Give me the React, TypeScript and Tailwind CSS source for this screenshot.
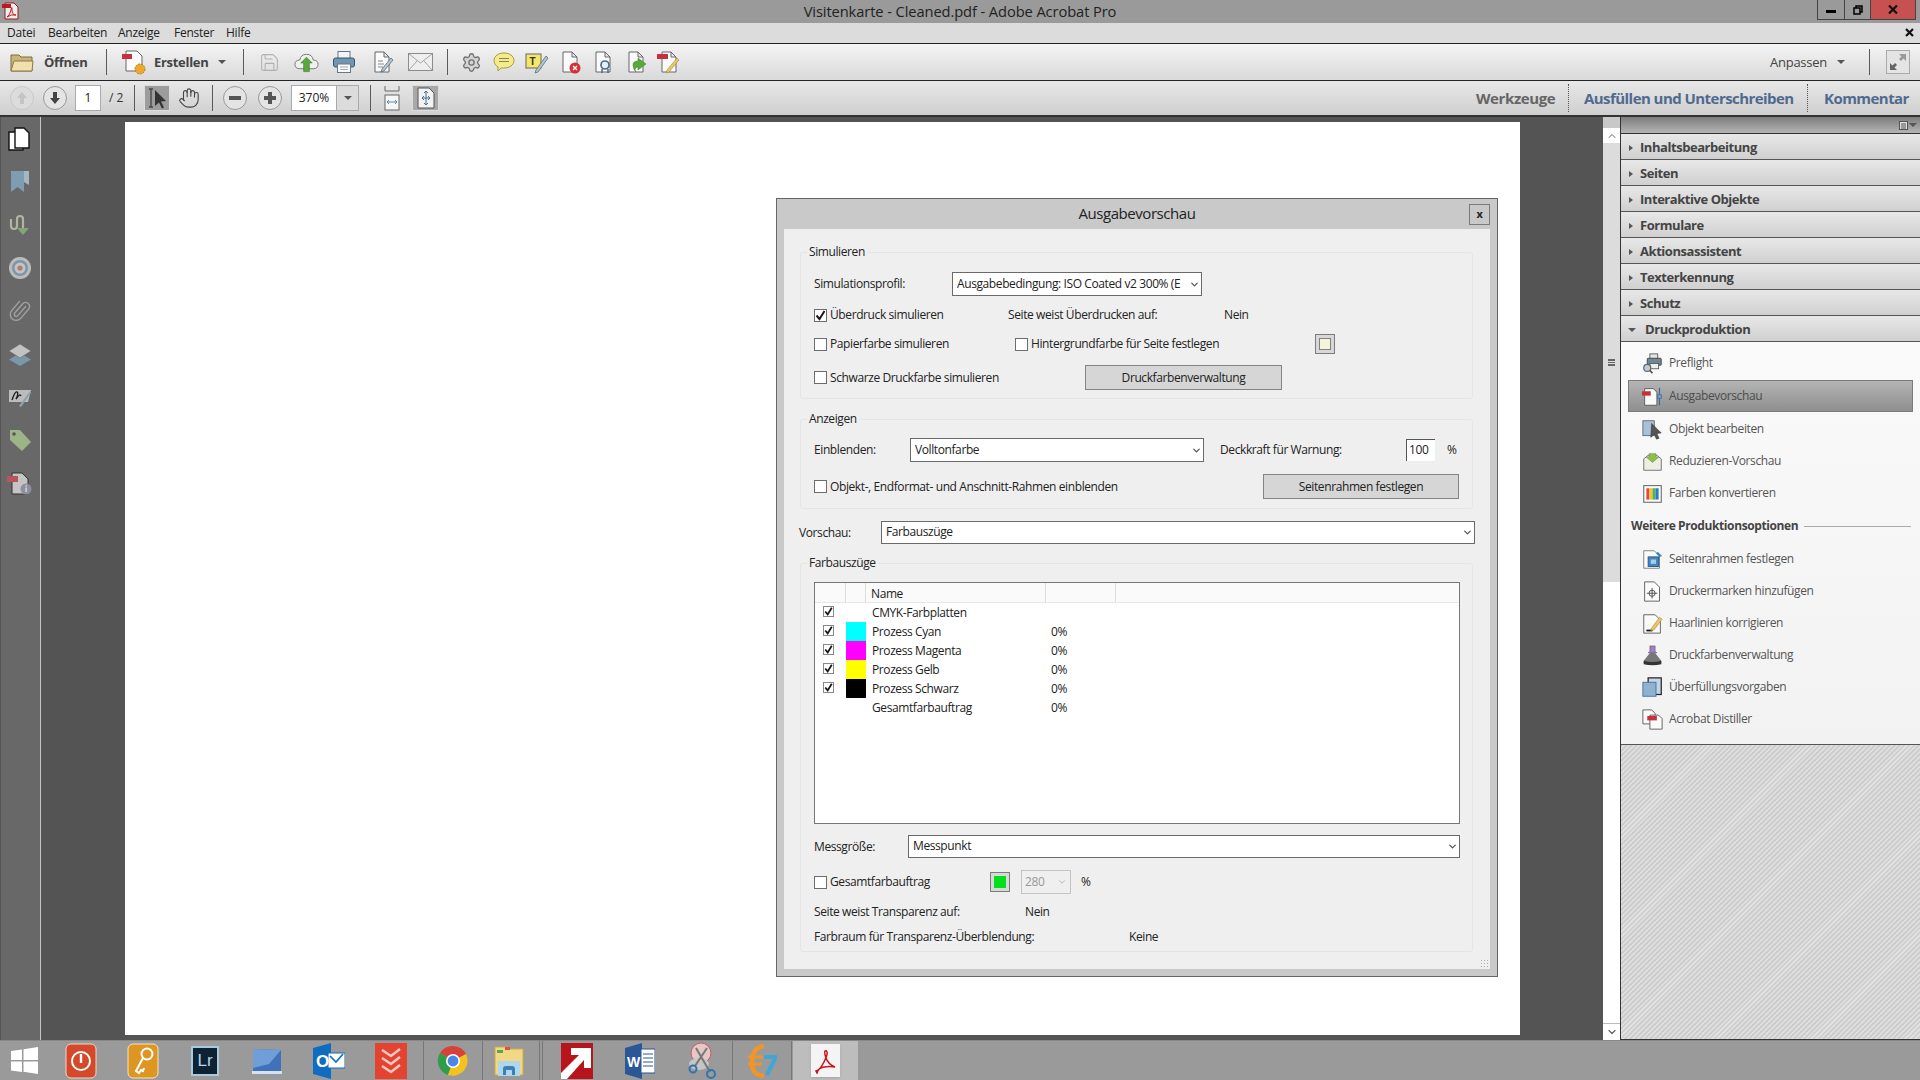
import React from "react";
import { Hand, Paperclip, Settings, Save, ChevronDown, ChevronUp } from "lucide-react";

const menu = [
  { label: "Datei", w: "w-[41px]" },
  { label: "Bearbeiten", w: "w-[70px]" },
  { label: "Anzeige", w: "w-[56px]" },
  { label: "Fenster", w: "w-[52px]" },
  { label: "Hilfe", w: "w-[40px]" },
];

function Doc({ fill = "#fafafa", stroke = "#666" }: { fill?: string; stroke?: string }) {
  return <path d="M5 2h9l5 5v15H5z M14 2v5h5" fill={fill} stroke={stroke} strokeWidth="1" />;
}

function Ic({ children, size = 24 }: { children: React.ReactNode; size?: number }) {
  return (
    <svg width={size} height={size} viewBox="0 0 24 24" className="shrink-0">
      {children}
    </svg>
  );
}

function Tb({ w, children }: { w: string; children?: React.ReactNode }) {
  return <div className={`${w} flex items-center justify-center shrink-0`}>{children}</div>;
}

function Sep({ ml = "" }: { ml?: string }) {
  return <div className={`w-px h-[26px] bg-[#5a5a5a] shrink-0 ${ml}`} />;
}

function Caret({ className = "" }: { className?: string }) {
  return <div className={`w-0 h-0 border-x-[4px] border-x-transparent border-t-[4px] border-t-[#555] ${className}`} />;
}

function Check({ on = false }: { on?: boolean }) {
  return (
    <div className="w-[13px] h-[13px] border border-[#6d6d6d] bg-white flex items-center justify-center shrink-0">
      {on && (
        <svg width="11" height="11" viewBox="0 0 11 11">
          <path d="M1.5 5.5l3 3.5 5-8" fill="none" stroke="#1a1a1a" strokeWidth="2" />
        </svg>
      )}
    </div>
  );
}

function Labeled({ on, w, children }: { on?: boolean; w: string; children: React.ReactNode }) {
  return (
    <div className={`${w} flex items-center gap-[3px] shrink-0`}>
      <Check on={on} />
      <span className="whitespace-nowrap">{children}</span>
    </div>
  );
}

function Select({ w, h = "h-[24px]", children, clip }: { w: string; h?: string; children: React.ReactNode; clip?: boolean }) {
  return (
    <div className={`${w} ${h} shrink-0 border border-[#6a6a6a] bg-white flex items-center pl-[4px] pr-[1px]`}>
      <span className={`flex-1 whitespace-nowrap overflow-hidden pb-[1px] ${clip ? "mr-[7px]" : ""}`}>{children}</span>
      <ChevronDown size={11} strokeWidth={2.8} className="text-[#555] shrink-0" />
    </div>
  );
}

function Btn({ w, h = "h-[25px]", children }: { w: string; h?: string; children: React.ReactNode }) {
  return (
    <div className={`${w} ${h} shrink-0 bg-[#d6d6d6] border border-[#848484] flex items-center justify-center`}>{children}</div>
  );
}

function Group({ title, className = "", children }: { title: string; className?: string; children: React.ReactNode }) {
  return (
    <div className={`relative mx-[16px] mr-[17px] border border-[#e5e5e5] rounded-[3px] pl-[13px] ${className}`}>
      <div className="absolute -top-[9px] left-[6px] bg-[#efefef] px-[2px] leading-[16px]">{title}</div>
      {children}
    </div>
  );
}

function Swatch({ color }: { color: string }) {
  return (
    <div className="w-[20px] h-[20px] shrink-0 border border-[#7c7c7c] bg-[#d8d8d8] flex items-center justify-center">
      <div className={`w-[12px] h-[12px] border border-[#808080] ${color}`} />
    </div>
  );
}

const plates = [
  { name: "CMYK-Farbplatten", check: true, color: "", pct: "" },
  { name: "Prozess Cyan", check: true, color: "bg-[#00ffff]", pct: "0%" },
  { name: "Prozess Magenta", check: true, color: "bg-[#ff00ff]", pct: "0%" },
  { name: "Prozess Gelb", check: true, color: "bg-[#ffff00]", pct: "0%" },
  { name: "Prozess Schwarz", check: true, color: "bg-black", pct: "0%" },
  { name: "Gesamtfarbauftrag", check: false, color: "", pct: "0%" },
];

function OutputPreview() {
  return (
    <div className="absolute left-[651px] top-[76px] w-[722px] h-[779px] border border-[#666] bg-[#c9c9c9] flex flex-col text-[12px] text-[#222] tracking-[-0.4px]">
      <div className="h-[30px] shrink-0 flex items-center pl-[28px] pr-[7px]">
        <div className="flex-1 text-center text-[15px] text-[#222] tracking-[-0.45px] pb-[2px]">Ausgabevorschau</div>
        <div className="w-[21px] h-[21px] border border-[#7a7a7a] flex items-center justify-center text-[11px] font-bold">x</div>
      </div>
      <div className="mx-[7px] h-[740px] bg-[#efefef] pt-[23px] flex flex-col relative">
        <Group title="Simulieren" className="h-[147px]">
          <div className="mt-[19px] h-[24px] flex items-center">
            <div className="w-[138px]">Simulationsprofil:</div>
            <Select w="w-[250px]" clip>Ausgabebedingung: ISO Coated v2 300% (E</Select>
          </div>
          <div className="mt-[9px] h-[20px] flex items-center">
            <Labeled on w="w-[194px]">Überdruck simulieren</Labeled>
            <div className="w-[216px]">Seite weist Überdrucken auf:</div>
            <div>Nein</div>
          </div>
          <div className="mt-[9px] h-[20px] flex items-center">
            <Labeled w="w-[201px]">Papierfarbe simulieren</Labeled>
            <Labeled w="w-[300px]">Hintergrundfarbe für Seite festlegen</Labeled>
            <Swatch color="bg-[#f4f4dc]" />
          </div>
          <div className="mt-[11px] h-[25px] flex items-center">
            <Labeled w="w-[271px]">Schwarze Druckfarbe simulieren</Labeled>
            <Btn w="w-[197px]">Druckfarbenverwaltung</Btn>
          </div>
        </Group>
        <Group title="Anzeigen" className="h-[90px] mt-[20px]">
          <div className="mt-[18px] h-[24px] flex items-center">
            <div className="w-[96px]">Einblenden:</div>
            <Select w="w-[294px]">Volltonfarbe</Select>
            <div className="w-[186px] ml-[16px]">Deckkraft für Warnung:</div>
            <div className="w-[29px] h-[22px] border-t border-l border-[#555] bg-white pl-[2px] leading-[20px]">100</div>
            <div className="ml-[12px]">%</div>
          </div>
          <div className="mt-[12px] h-[25px] flex items-center">
            <Labeled w="w-[449px]">Objekt-, Endformat- und Anschnitt-Rahmen einblenden</Labeled>
            <Btn w="w-[196px]">Seitenrahmen festlegen</Btn>
          </div>
        </Group>
        <div className="mt-[12px] h-[23px] pl-[15px] flex items-center">
          <div className="w-[82px]">Vorschau:</div>
          <Select w="w-[594px]" h="h-[23px]">Farbauszüge</Select>
        </div>
        <Group title="Farbauszüge" className="h-[389px] mt-[19px]">
          <div className="mt-[18px] w-[646px] h-[242px] border border-[#777] bg-white flex flex-col">
            <div className="h-[20px] shrink-0 flex border-b border-[#e6e6e6] bg-[#fafafa]">
              <div className="w-[31px] border-r border-[#ddd]" />
              <div className="w-[20px] border-r border-[#ddd]" />
              <div className="w-[180px] border-r border-[#ddd] pl-[5px] leading-[21px]">Name</div>
              <div className="w-[70px] border-r border-[#ddd]" />
            </div>
            <div>
              {plates.map((p) => (
                <div key={p.name} className="h-[19px] flex items-center">
                  <div className="w-[31px] pl-[8px]">
                    {p.check && (
                      <div className="w-[11px] h-[11px] border border-[#888] bg-white flex items-center justify-center -mt-[3px]">
                        <svg width="9" height="9" viewBox="0 0 11 11">
                          <path d="M1.500 5.500l3 3.500 5-8" fill="none" stroke="#1a1a1a" strokeWidth="2.200" />
                        </svg>
                      </div>
                    )}
                  </div>
                  <div className={`w-[20px] h-[19px] shrink-0 ${p.color}`} />
                  <div className="w-[185px] pl-[6px]">{p.name}</div>
                  <div>{p.pct}</div>
                </div>
              ))}
            </div>
          </div>
          <div className="mt-[11px] h-[23px] flex items-center">
            <div className="w-[94px]">Messgröße:</div>
            <Select w="w-[552px]" h="h-[23px]">Messpunkt</Select>
          </div>
          <div className="mt-[12px] h-[24px] flex items-center">
            <Labeled w="w-[176px]">Gesamtfarbauftrag</Labeled>
            <div className="w-[20px] h-[20px] shrink-0 border border-[#7c7c7c] bg-[#d8d8d8] flex items-center justify-center">
              <div className="w-[12px] h-[12px] bg-[#00e01e]" />
            </div>
            <div className="ml-[11px] w-[50px] h-[24px] border border-[#c4c4c4] flex items-center pl-[3px] text-[#999]">
              <span className="flex-1">280</span>
              <ChevronDown size={10} strokeWidth={2} className="text-[#aaa] mr-[3px]" />
            </div>
            <div className="ml-[10px]">%</div>
          </div>
          <div className="mt-[8px] h-[20px] flex items-center">
            <div className="w-[211px]">Seite weist Transparenz auf:</div>
            <div>Nein</div>
          </div>
          <div className="mt-[5px] h-[20px] flex items-center">
            <div className="w-[315px]">Farbraum für Transparenz-Überblendung:</div>
            <div>Keine</div>
          </div>
        </Group>
        <div className="absolute right-[2px] bottom-[2px] w-[8px] h-[8px] bg-[radial-gradient(#aaa_1px,transparent_1px)] bg-[length:3px_3px]" />
      </div>
    </div>
  );
}

const railIcons: React.ReactNode[] = [
  <svg key="p" width="26" height="26" viewBox="0 0 26 26">
    <path d="M2 6h14v18H2z" fill="#fff" stroke="#111" strokeWidth="1.400" />
    <path d="M8 2h9l5 5v15H8z" fill="#fff" stroke="#111" strokeWidth="1.400" />
  </svg>,
  <svg key="b" width="24" height="26" viewBox="0 0 24 26">
    <path d="M3 2h13v21l-6.500-5L3 23z" fill="#7f9db1" />
    <path d="M16 2h5v14l-5-3z" fill="#a5b7c2" />
  </svg>,
  <svg key="s" width="24" height="24" viewBox="0 0 24 24">
    <path d="M3 6v7q0 3 3 3t3-3V6q0-3 3-3t3 3v9" fill="none" stroke="#aeb6a2" strokeWidth="2.200" />
    <path d="M9 15h12l-6 7z" fill="#86a47a" />
  </svg>,
  <svg key="t" width="24" height="24" viewBox="0 0 24 24">
    <circle cx="12" cy="12" r="11" fill="#bcbcbc" />
    <circle cx="12" cy="12" r="8" fill="#7a96a8" />
    <circle cx="12" cy="12" r="5.500" fill="#c4c4c4" />
    <circle cx="12" cy="12" r="2.600" fill="#b47a7a" />
  </svg>,
  <Paperclip key="c" size={24} strokeWidth={1.400} className="text-[#a0a0a0] -scale-x-100 rotate-[85deg]" />,
  <svg key="l" width="24" height="24" viewBox="0 0 24 24">
    <path d="M12 11l11 6.500L12 24 1 17.500z" fill="#7a98aa" />
    <path d="M12 2l11 7-11 7L1 9z" fill="#c2c2c2" stroke="#666" strokeWidth=".6" />
  </svg>,
  <svg key="g" width="24" height="24" viewBox="0 0 24 24">
    <path d="M1 5h22l-3 12H1z" fill="#bcbcbc" />
    <path d="M4 15q3-9 5-8t-1 7q4-6 5-3" fill="none" stroke="#222" strokeWidth="1.400" />
    <path d="M11 21L22 6l1 2-10 14z" fill="#8fa3ae" />
  </svg>,
  <svg key="h" width="24" height="24" viewBox="0 0 24 24">
    <path d="M2 2h10l11 12-9 9L2 12z" fill="#9db487" />
    <circle cx="6" cy="6" r="1.800" fill="#555" />
  </svg>,
  <svg key="i" width="26" height="26" viewBox="0 0 26 26">
    <path d="M5 3h10l6 6v15H5z" fill="#c4c4c4" stroke="#333" />
    <rect x="0" y="6" width="11" height="6" fill="#b8545c" />
    <circle cx="19" cy="19" r="5.500" fill="#8e8e9e" />
    <rect x="18.400" y="17.500" width="1.400" height="4.500" fill="#ddd" />
    <rect x="18.400" y="15.200" width="1.400" height="1.400" fill="#ddd" />
  </svg>,
];

const sections = ["Inhaltsbearbeitung", "Seiten", "Interaktive Objekte", "Formulare", "Aktionsassistent", "Texterkennung", "Schutz"];

const panelIcons: Record<string, React.ReactNode> = {
  preflight: (
    <>
      <rect x="9" y="1" width="9" height="6" fill="#e4e4e4" stroke="#555" />
      <rect x="6" y="6" width="16" height="8" rx="1" fill="#6d8796" stroke="#444" />
      <rect x="9" y="12" width="10" height="6" fill="#eee" stroke="#555" />
      <circle cx="6" cy="17" r="4" fill="#bcd" stroke="#666" strokeWidth="1.400" />
      <path d="M9 20l3 3" stroke="#555" strokeWidth="2" />
    </>
  ),
  output: (
    <>
      <path d="M3 3h10l4 4v15H3z" fill="#fafafa" stroke="#555" />
      <rect x="0" y="6" width="10" height="5" fill="#c6303c" />
      <path d="M20 2v20" stroke="#3d6f9e" strokeWidth="1.400" />
      <rect x="18" y="10" width="4" height="4" fill="#7aa5c8" stroke="#3d6f9e" />
    </>
  ),
  object: (
    <>
      <rect x="1" y="2" width="13" height="17" fill="#a9c0d8" stroke="#55677a" />
      <path d="M11 5l11 11-5 .5 2.500 5.500-3 1-2.500-5.500L10 21z" fill="#555" stroke="#333" strokeWidth=".6" />
    </>
  ),
  flatten: (
    <>
      <path d="M2 9l5-4h10l5 4v13H2z" fill="#eeeee4" stroke="#666" />
      <path d="M8 3h8v4h3l-7 6-7-6h3z" fill="#8fc04e" stroke="#5e8a2f" strokeWidth=".6" />
    </>
  ),
  colors: (
    <>
      <rect x="2" y="3" width="20" height="19" fill="#fff" stroke="#666" strokeWidth="1.200" />
      <rect x="5" y="6" width="3.500" height="13" fill="#e8483c" />
      <rect x="8.500" y="6" width="3.500" height="13" fill="#f4c430" />
      <rect x="12" y="6" width="3.500" height="13" fill="#4fb35a" />
      <rect x="15.500" y="6" width="3.500" height="13" fill="#2f79c8" />
    </>
  ),
  frames: (
    <>
      <path d="M2 2h12l6 6v14H2z" fill="#fafafa" stroke="#777" />
      <rect x="7" y="9" width="12" height="11" fill="#3e86c4" stroke="#25557f" />
      <rect x="10" y="12" width="6" height="5" fill="#a7cdec" />
      <path d="M18 3l5 5-3 1-4-4z" fill="#3e86c4" />
    </>
  ),
  marks: (
    <>
      <path d="M3 1h11l6 6v16H3z" fill="#fafafa" stroke="#555" />
      <circle cx="11.500" cy="14" r="3.500" fill="none" stroke="#444" />
      <path d="M11.500 8v12M5.500 14h12" stroke="#444" />
    </>
  ),
  hairline: (
    <>
      <path d="M2 2h13l6 6v15H2z" fill="#fafafa" stroke="#555" />
      <path d="M5 20h7" stroke="#111" strokeWidth="2" />
      <path d="M11 17L20 5l3 2-9 12-4 1z" fill="#e8c66c" stroke="#a58a3f" strokeWidth=".7" />
    </>
  ),
  ink: (
    <>
      <path d="M9 1h6v6l2 2H7l2-2z" fill="#9b7fc0" stroke="#5b4a7a" strokeWidth=".6" />
      <path d="M9 9h6l7 9v3q-10 3-20 0v-3z" fill="#777" />
      <path d="M2 18q10 3 20 0v4q-10 2-20 0z" fill="#333" />
    </>
  ),
  trap: (
    <>
      <rect x="7" y="1" width="15" height="19" fill="#c4d6e4" stroke="#222" strokeWidth="1.400" />
      <rect x="1" y="6" width="15" height="16" fill="#8fb3cf" stroke="#3d6f9e" />
    </>
  ),
  distiller: (
    <>
      <path d="M1 1h10l4 4v12H1z" fill="#fafafa" stroke="#555" />
      <path d="M9 7h10l4 4v12H9z" fill="#fafafa" stroke="#555" />
      <rect x="6" y="8" width="11" height="5" fill="#c6303c" />
    </>
  ),
};

function PanelRow({ icon, label, active }: { icon: string; label: string; active?: boolean }) {
  return (
    <div
      className={`h-[32px] flex items-center ${
        active ? "mx-[7px] my-px h-[30px] border border-[#7b7b7b] bg-gradient-to-b from-[#b4b4b4] to-[#8f8f8f] pl-[13px]" : "pl-[21px]"
      }`}
    >
      <svg width="21" height="21" viewBox="0 0 24 24" className="shrink-0">
        {panelIcons[icon]}
      </svg>
      <span className={`ml-[6px] text-[12px] tracking-[-0.38px] ${active ? "text-[#4c4c4c]" : "text-[#555]"}`}>{label}</span>
    </div>
  );
}

function Taskbar() {
  return (
    <div className="h-[40px] shrink-0 bg-[#9a9a9a] border-t border-[#888] flex items-center">
      <Tb w="w-[49px]">
        <svg width="27" height="27" viewBox="0 0 27 27">
          <path d="M0 4l11-1.500v10.500H0zM12.500 2.300L27 0v13H12.500zM0 14.500h11V25L0 23.500zM12.500 14.500H27V27l-14.500-2.200z" fill="#fff" />
        </svg>
      </Tb>
      <Tb w="w-[63px]">
        <svg width="32" height="36" viewBox="0 0 32 36">
          <rect x="1" y="1" width="30" height="34" rx="5" fill="#d4492a" stroke="#f3d6c8" />
          <circle cx="16" cy="18" r="9" fill="none" stroke="#fff" strokeWidth="2" />
          <path d="M16 11v9" stroke="#fff" strokeWidth="2.400" />
        </svg>
      </Tb>
      <Tb w="w-[62px]">
        <svg width="32" height="36" viewBox="0 0 32 36">
          <rect x="1" y="1" width="30" height="34" rx="5" fill="#dc9621" stroke="#f7e6c4" />
          <circle cx="20" cy="11" r="5.500" fill="none" stroke="#fff" strokeWidth="2" />
          <path d="M16 15L9 28l3 2 2-3 2 1 1-3" fill="none" stroke="#fff" strokeWidth="2" />
        </svg>
      </Tb>
      <Tb w="w-[62px]">
        <div className="w-[28px] h-[30px] bg-[#0d2233] border-2 border-[#a9c9dc] text-[#b7d6ea] text-[17px] leading-[26px] text-center font-['Liberation_Sans',sans-serif]">Lr</div>
      </Tb>
      <Tb w="w-[61px]">
        <svg width="32" height="28" viewBox="0 0 32 28">
          <path d="M2 2l28 1v21H2z" fill="#3f72b8" />
          <path d="M2 2l28 1-12 14-16 4z" fill="#6f9fd6" />
          <rect x="1" y="24" width="30" height="3" fill="#d5e2ee" />
        </svg>
      </Tb>
      <Tb w="w-[63px]">
        <svg width="32" height="36" viewBox="0 0 32 36">
          <path d="M0 5l18-5v36L0 31z" fill="#0f6cc0" />
          <rect x="15" y="10" width="17" height="15" fill="#fff" stroke="#0f6cc0" />
          <path d="M17 13l6 6 7-8" fill="none" stroke="#0f6cc0" strokeWidth="1.600" />
          <text x="3" y="24" fontSize="17" fontWeight="700" fill="#fff" fontFamily="Liberation Sans">O</text>
        </svg>
      </Tb>
      <Tb w="w-[62px]">
        <svg width="32" height="36" viewBox="0 0 32 36">
          <rect width="32" height="36" fill="#e44332" />
          <path d="M7 7l9 6 9-7M7 15l9 6 9-7M7 23l9 6 9-7" fill="none" stroke="#f7c8c0" strokeWidth="2.600" />
        </svg>
      </Tb>
      <Tb w="w-[61px]">
        <div className="w-[60px] h-[39px] border-x border-[#777] flex items-center justify-center">
          <svg width="32" height="32" viewBox="0 0 32 32">
            <path d="M16 16L29 9A15 15 0 0 0 3 8z" fill="#d8413a" />
            <path d="M16 16L3 8A15 15 0 0 0 11 30z" fill="#2f9e4a" />
            <path d="M16 16L11 30A15 15 0 0 0 29 9z" fill="#f3c21f" />
            <circle cx="16" cy="16" r="7" fill="#fff" />
            <circle cx="16" cy="16" r="5.400" fill="#4a86e8" />
          </svg>
        </div>
      </Tb>
      <Tb w="w-[51px]">
        <svg width="32" height="36" viewBox="0 0 32 36">
          <path d="M2 4h12l2 2h14v26H2z" fill="#f2d884" stroke="#c9a94e" />
          <rect x="4" y="7" width="6" height="3" fill="#59a84f" />
          <rect x="12" y="4" width="5" height="3" fill="#d8524a" />
          <rect x="5" y="18" width="22" height="15" fill="#aed6ee" />
          <path d="M10 32v-6q0-3 3-3h6q3 0 3 3v6h-3v-5h-6v5z" fill="#3c7fb1" />
        </svg>
      </Tb>
      <div className="w-[13px] h-[39px] flex justify-center shrink-0"><div className="w-[4px] border-x border-[#777]" /></div>
      <Tb w="w-[59px]">
        <svg width="32" height="36" viewBox="0 0 32 36">
          <rect width="32" height="36" fill="#b8141c" />
          <path d="M0 36v-6L18 12h-8V5h20v20h-7v-8L6 36z" fill="#fff" />
        </svg>
      </Tb>
      <Tb w="w-[67px]">
        <svg width="30" height="36" viewBox="0 0 30 36">
          <path d="M0 5l17-5v36L0 31z" fill="#2b5797" />
          <rect x="16" y="6" width="14" height="24" fill="#fff" stroke="#2b5797" />
          <path d="M18 11h10M18 15h10M18 19h10M18 23h10" stroke="#2b5797" />
          <text x="2" y="24" fontSize="14" fontWeight="700" fill="#fff" fontFamily="Liberation Sans">W</text>
        </svg>
      </Tb>
      <Tb w="w-[58px]">
        <svg width="30" height="38" viewBox="0 0 30 38">
          <circle cx="14" cy="11" r="10" fill="#e7c6c6" stroke="#c65f5f" />
          <ellipse cx="12" cy="22" rx="10" ry="6" fill="#c5c5c5" />
          <path d="M9 6l14 24M20 6L8 24" stroke="#777" strokeWidth="2" />
          <circle cx="24" cy="32" r="4" fill="none" stroke="#2f74b5" strokeWidth="2" />
          <circle cx="6" cy="27" r="3.500" fill="none" stroke="#2f74b5" strokeWidth="2" />
        </svg>
      </Tb>
      <Tb w="w-[62px]">
        <div className="w-[60px] h-[39px] border-x border-[#777] flex items-center justify-center">
          <svg width="30" height="34" viewBox="0 0 30 34">
            <path d="M17 2Q6 3 5 17t12 15" fill="none" stroke="#f0952a" strokeWidth="4.500" />
            <path d="M1 13h15M1 20h14" stroke="#f0952a" strokeWidth="3" />
            <path d="M17 13h12L20 31" fill="none" stroke="#3fa7d6" strokeWidth="4" />
          </svg>
        </div>
      </Tb>
      <div className="w-[65px] h-[39px] bg-[#bdbdbd] flex items-center justify-center shrink-0">
        <div className="w-[29px] h-[33px] bg-[#f4f4f4] shadow-sm flex items-center justify-center">
          <svg width="24" height="26" viewBox="0 0 24 26">
            <path d="M2 23q4-1 8-9t3-10-2-1 1 7 9 9q-5-1-11 0t-7 6z" fill="none" stroke="#c8141c" strokeWidth="1.500" />
          </svg>
        </div>
      </div>
    </div>
  );
}

function Round({ children, dim }: { children: React.ReactNode; dim?: boolean }) {
  return (
    <div className={`w-[24px] h-[24px] rounded-full border flex items-center justify-center shrink-0 ${dim ? "border-[#c8c8c8] bg-[#dcdcdc]" : "border-[#999] bg-[#e4e4e4]"}`}>
      <svg width="20" height="20" viewBox="0 0 20 20">{children}</svg>
    </div>
  );
}

export default function App() {
  return (
    <div className="w-[1920px] h-[1080px] flex flex-col overflow-hidden font-['Open_Sans',sans-serif] text-[12px] text-[#222]">
      <div className="h-[23px] shrink-0 bg-[#9a9a9a] flex">
        <div className="w-[200px] pl-[2px] pt-[1px]">
          <svg width="17" height="19" viewBox="0 0 17 19">
            <path d="M3 2h9l4 4v12H3z" fill="#eee" stroke="#8a2020" />
            <rect x="0" y="3" width="9" height="4" fill="#c01820" />
            <path d="M5 16q3-2 4-7t1 0 4 5q-5-1-9 2z" fill="none" stroke="#c01820" />
          </svg>
        </div>
        <div className="flex-1 text-center text-[14.700px] leading-[23px] tracking-[-0.1px] text-[#222]">Visitenkarte - Cleaned.pdf - Adobe Acrobat Pro</div>
        <div className="w-[200px] flex justify-end pr-[4px]">
          <div className="w-[28px] h-[20px] border-x border-b border-[#444] flex items-center justify-center pt-[4px]">
            <div className="w-[10px] h-[3px] bg-black" />
          </div>
          <div className="w-[26px] h-[20px] border-r border-b border-[#444] flex items-center justify-center">
            <svg width="10" height="10" viewBox="0 0 10 10">
              <path d="M3 2.500V1h6v6H7.500M1 3h6v6H1z" fill="none" stroke="#000" strokeWidth="1.500" />
            </svg>
          </div>
          <div className="w-[45px] h-[20px] bg-[#c75050] border-r border-b border-[#444] flex items-center justify-center">
            <svg width="10" height="9" viewBox="0 0 10 9">
              <path d="M1 .5l8 8M9 .5l-8 8" stroke="#111" strokeWidth="2.200" />
            </svg>
          </div>
        </div>
      </div>

      <div className="h-[21px] shrink-0 bg-[#dcdcdc] border-b border-[#222] flex items-center pl-[7px] text-[12px] pb-px tracking-[-0.25px]">
        {menu.map((m) => (
          <div key={m.label} className={m.w}>{m.label}</div>
        ))}
        <div className="flex-1" />
        <svg width="9" height="9" viewBox="0 0 9 9" className="mr-[6px]">
          <path d="M1 1l7 7M8 1L1 8" stroke="#111" strokeWidth="2.200" />
        </svg>
      </div>

      <div className="h-[37px] shrink-0 bg-gradient-to-b from-[#f4f4f4] to-[#d9d9d9] border-b border-[#222] flex items-center">
        <div className="w-[44px] flex justify-center">
          <svg width="24" height="20" viewBox="0 0 24 20">
            <path d="M1 3h8l2 2h11v14H1z" fill="#c9b47a" stroke="#7f6c3c" />
            <path d="M1 19l3-10h19l-1 10z" fill="#efe0ae" stroke="#8c7a48" />
          </svg>
        </div>
        <div className="w-[62px] pt-[2px] text-[13px] font-bold text-[#444] tracking-[-0.3px]">Öffnen</div>
        <Sep />
        <div className="w-[47px] pl-[7px] flex justify-center">
          <svg width="24" height="26" viewBox="0 0 24 26">
            <path d="M4 2h11l5 5v15H4z" fill="#fafafa" stroke="#666" />
            <rect x="0" y="5" width="10" height="5" fill="#c6303c" />
            <circle cx="18" cy="20" r="5" fill="#eda92c" stroke="#b97a12" strokeDasharray="2 1" />
          </svg>
        </div>
        <div className="w-[64px] pt-[2px] text-[13px] font-bold text-[#444] tracking-[-0.3px]">Erstellen</div>
        <Caret />
        <div className="w-[17px]" />
        <Sep />
        <Tb w="w-[50px]"><Save size={21} strokeWidth={1.200} className="text-[#b0b0b0]" /></Tb>
        <Tb w="w-[25px]">
          <svg width="26" height="22" viewBox="0 0 26 22">
            <path d="M6 18q-5 0-5-4.500t5-4.500q1-6 7-6t7 6q5 0 5 4.500t-5 4.500z" fill="#f0f0f0" stroke="#777" />
            <path d="M13 6l6 6h-3v9h-6v-9H7z" fill="#5aa83c" stroke="#3d7a26" strokeWidth=".6" />
          </svg>
        </Tb>
        <Tb w="w-[50px]">
          <svg width="24" height="24" viewBox="0 0 24 24">
            <rect x="6" y="1.500" width="12" height="8" fill="#f4f4f4" stroke="#66798a" />
            <rect x="1.500" y="8" width="21" height="9" rx="2" fill="#6f97b5" stroke="#3f5566" />
            <rect x="5.500" y="14" width="13" height="8.500" fill="#f8f8f8" stroke="#66798a" />
            <path d="M8 17h8M8 19.500h8" stroke="#aaa" />
          </svg>
        </Tb>
        <Tb w="w-[25px]">
          <Ic><Doc /><path d="M8 17h5M8 14h6M8 11h5" stroke="#888" /><path d="M12 19l9-11 2 2-9 11-3 1z" fill="#b4c6d2" stroke="#4c5f6c" strokeWidth=".7" /></Ic>
        </Tb>
        <Tb w="w-[53px]">
          <svg width="25" height="18" viewBox="0 0 25 18">
            <rect x=".5" y=".5" width="24" height="17" fill="#eeeeee" stroke="#8c8c8c" />
            <path d="M1 1l11.500 9L24 1M1 17l8-9M24 17l-8-9" fill="none" stroke="#a4a4a4" />
          </svg>
        </Tb>
        <Sep ml="mr-[11px]" />
        <Tb w="w-[24px]"><Settings size={21} strokeWidth={1.500} fill="#d4d4d4" className="text-[#707070]" /></Tb>
        <Tb w="w-[42px]">
          <svg width="22" height="20" viewBox="0 0 22 20">
            <path d="M11 1c5.500 0 10 3 10 7.500S16.500 16 11 16q-2 0-3 0l-3 3v-4C2.500 13.500 1 11 1 8.500 1 4 5.500 1 11 1z" fill="#f4ec8c" stroke="#a69a3a" />
            <path d="M6 6.500h10M6 9.500h10" stroke="#8a8648" />
          </svg>
        </Tb>
        <Tb w="w-[24px]">
          <Ic><rect x="1" y="4" width="15" height="14" fill="#f3e668" stroke="#666" /><text x="4.500" y="14.500" fontSize="10" fontWeight="700" fill="#333" fontFamily="Liberation Sans">T</text><path d="M11 20L21 6l2 2-10 14-3 1z" fill="#b4c6d2" stroke="#4c5f6c" strokeWidth=".7" /></Ic>
        </Tb>
        <Tb w="w-[42px]">
          <Ic><Doc /><circle cx="17" cy="18" r="5.500" fill="#d62f3a" /><path d="M15 16l4 4M19 16l-4 4" stroke="#fff" strokeWidth="1.300" /></Ic>
        </Tb>
        <Tb w="w-[24px]">
          <Ic><Doc /><circle cx="14" cy="15" r="4" fill="#e4eef4" stroke="#4a6d88" strokeWidth="1.700" /><path d="M11 19v4M17 19v4" stroke="#4a6d88" strokeWidth="1.500" /></Ic>
        </Tb>
        <Tb w="w-[42px]">
          <Ic><Doc /><path d="M9 15q0-4 5-4v-3l8 6-8 6v-3q-3 0-3 3 0 1 1 2-3-3-3-7z" fill="#5aa83c" stroke="#3d7a26" strokeWidth=".5" /></Ic>
        </Tb>
        <Tb w="w-[24px]">
          <Ic><Doc /><rect x="0" y="4" width="11" height="5" fill="#c6303c" /><path d="M10 20L20 8l2 2-10 12-3 1z" fill="#e8c66c" stroke="#a58a3f" strokeWidth=".6" /></Ic>
        </Tb>
        <div className="flex-1" />
        <div className="w-[67px] pt-[1px] text-[13px] text-[#444] tracking-[-0.25px]">Anpassen</div>
        <Caret />
        <div className="w-[24px]" />
        <Sep />
        <div className="w-[16px]" />
        <div className="w-[24px] h-[24px] border border-[#aaa] bg-[#e4e4e4] flex items-center justify-center">
          <svg width="20" height="20" viewBox="0 0 20 20">
            <path d="M11 2h7v7l-2.500-2.500L13 9l-2-2 2.500-2.500z" fill="#999" />
            <path d="M9 18H2v-7l2.500 2.500L7 11l2 2-2.500 2.500z" fill="#666" />
          </svg>
        </div>
        <div className="w-[10px]" />
      </div>

      <div className="h-[36px] shrink-0 bg-gradient-to-b from-[#e8e8e8] to-[#cfcfcf] border-b-2 border-[#333] flex items-center">
        <div className="w-[10px]" />
        <Round dim><path d="M10 4l5 6h-3v6H8v-6H5z" fill="#c4c4c4" /></Round>
        <div className="w-[9px]" />
        <Round><path d="M10 16l5-6h-3V4H8v6H5z" fill="#444" /></Round>
        <div className="w-[8px]" />
        <div className="w-[26px] h-[26px] bg-white border border-[#aaa] flex items-center justify-center text-[12px]">1</div>
        <div className="w-[33px] pl-[8px] text-[12px] text-[#333]">/ 2</div>
        <Sep />
        <div className="w-[9px]" />
        <div className="w-[26px] h-[26px] bg-[#9c9c9c] border border-[#ddd] flex items-center justify-center">
          <svg width="22" height="22" viewBox="0 0 22 22">
            <path d="M3 2h4M3 20h4M5 2v18" stroke="#444" strokeWidth="1.300" fill="none" />
            <path d="M9 3l11 11-5 .5 3 6-2 1-3-6-4 3.500z" fill="#333" />
          </svg>
        </div>
        <Tb w="w-[38px]"><Hand size={22} strokeWidth={1.200} className="text-[#444]" /></Tb>
        <div className="w-[4px]" />
        <Sep />
        <div className="w-[10px]" />
        <Round><rect x="4" y="8" width="12" height="4" fill="#555" /></Round>
        <div className="w-[11px]" />
        <Round><path d="M8 4h4v4h4v4h-4v4H8v-4H4V8h4z" fill="#555" /></Round>
        <div className="w-[9px]" />
        <div className="w-[68px] h-[26px] bg-white border border-[#aaa] flex text-[12px]">
          <div className="flex-1 flex items-center justify-center">370%</div>
          <div className="w-[22px] bg-[#dcdcdc] border-l border-[#aaa] flex items-center justify-center"><Caret /></div>
        </div>
        <div className="w-[11px]" />
        <Sep />
        <Tb w="w-[41px]">
          <svg width="20" height="26" viewBox="0 0 20 26">
            <path d="M3 1v5h14V1" fill="none" stroke="#666" />
            <rect x="3" y="10" width="14" height="15" fill="#f6f6f6" stroke="#666" />
            <path d="M5 17h10M5 17l2-2M5 17l2 2M15 17l-2-2M15 17l-2 2" stroke="#5a86ad" fill="none" />
          </svg>
        </Tb>
        <div className="w-[27px] h-[26px] bg-[#a8a8a8] border border-[#ddd] flex items-center justify-center">
          <svg width="18" height="22" viewBox="0 0 18 22">
            <path d="M1 1h11l5 5v15H1z" fill="#f2f2f2" stroke="#555" />
            <path d="M9 4v14M5 11h8M9 4l-2 2M9 4l2 2M9 18l-2-2M9 18l2-2M5 11l2-2M5 11l2 2M13 11l-2-2M13 11l-2 2" stroke="#47708f" fill="none" />
          </svg>
        </div>
        <div className="flex-1" />
        <div className="w-[92px] text-[15px] font-bold text-[#666] tracking-[-0.4px] whitespace-nowrap">Werkzeuge</div>
        <div className="h-[28px] border-l border-dotted border-[#555]" />
        <div className="w-[238px] pl-[15px] text-[15px] font-bold text-[#4f6a8f] tracking-[-0.55px] whitespace-nowrap">Ausfüllen und Unterschreiben</div>
        <div className="h-[28px] border-l border-dotted border-[#555]" />
        <div className="w-[112px] pl-[16px] text-[15px] font-bold text-[#4f6a8f] tracking-[-0.55px] whitespace-nowrap">Kommentar</div>
      </div>

      <div className="flex-1 min-h-0 flex">
        <div className="w-[41px] shrink-0 bg-[#686868] border-l border-[#555] border-r border-r-[#c4c4c4] flex flex-col items-center pr-[2px]">
          {railIcons.map((ic, i) => (
            <div key={i} className="h-[43px] w-[28px] flex items-center justify-center">{ic}</div>
          ))}
        </div>
        <div className="flex-1 bg-[#545454] pt-[5px] pl-[84px]">
          <div className="relative w-[1395px] h-[913px] bg-white">
            <OutputPreview />
          </div>
        </div>
        <div className="w-[17px] shrink-0 flex flex-col">
          <div className="h-[11px] bg-[#c8c8c8]" />
          <div className="h-[15px] bg-white flex items-center justify-center"><ChevronUp size={12} className="text-[#666]" /></div>
          <div className="h-[439px] bg-[#dcdcdc] flex items-center justify-center">
            <div className="w-[7px] h-[7px] border-y-2 border-[#666] flex items-center"><div className="w-full h-[1.500px] bg-[#666]" /></div>
          </div>
          <div className="flex-1 bg-white" />
          <div className="h-[17px] bg-white flex items-center justify-center border-t border-[#bbb]"><ChevronDown size={12} strokeWidth={2.500} className="text-[#666]" /></div>
        </div>
        <div className="w-[300px] shrink-0 border-l border-[#333] flex flex-col">
          <div className="h-[17px] shrink-0 bg-gradient-to-b from-[#7d7d7d] to-[#b4b4b4] border-b border-[#333] flex items-center justify-end pr-[3px] gap-[1px]">
            <svg width="9" height="9" viewBox="0 0 9 9">
              <rect x=".5" y=".5" width="8" height="8" fill="#ddd" stroke="#555" />
              <path d="M2 3h5M2 5h5M2 7h5" stroke="#555" />
            </svg>
            <Caret />
          </div>
          {sections.map((s) => (
            <div key={s} className="h-[26px] shrink-0 bg-gradient-to-b from-[#e8e8e8] to-[#d0d0d0] border-b border-[#555] flex items-center pl-[8px] pt-[2px] text-[13px] font-bold text-[#444] tracking-[-0.45px]">
              <div className="w-0 h-0 border-y-[3.500px] border-y-transparent border-l-[4px] border-l-[#555] mr-[7px]" />
              {s}
            </div>
          ))}
          <div className="h-[26px] shrink-0 bg-gradient-to-b from-[#e8e8e8] to-[#d0d0d0] border-b border-[#555] flex items-center pl-[7px] pt-[2px] text-[13px] font-bold text-[#444] tracking-[-0.45px]">
            <Caret className="mr-[9px]" />
            Druckproduktion
          </div>
          <div className="h-[403px] shrink-0 bg-gradient-to-b from-[#fafafa] to-[#f2f2f2] border-b border-[#555] pt-[5px]">
            <PanelRow icon="preflight" label="Preflight" />
            <PanelRow icon="output" label="Ausgabevorschau" active />
            <PanelRow icon="object" label="Objekt bearbeiten" />
            <PanelRow icon="flatten" label="Reduzieren-Vorschau" />
            <PanelRow icon="colors" label="Farben konvertieren" />
            <div className="h-[34px] flex items-center pl-[10px] pr-[9px] text-[12px] font-bold text-[#444] tracking-[-0.4px]">
              <span className="whitespace-nowrap">Weitere Produktionsoptionen</span>
              <div className="flex-1 h-px bg-[#aaa] ml-[6px]" />
            </div>
            <PanelRow icon="frames" label="Seitenrahmen festlegen" />
            <PanelRow icon="marks" label="Druckermarken hinzufügen" />
            <PanelRow icon="hairline" label="Haarlinien korrigieren" />
            <PanelRow icon="ink" label="Druckfarbenverwaltung" />
            <PanelRow icon="trap" label="Überfüllungsvorgaben" />
            <PanelRow icon="distiller" label="Acrobat Distiller" />
          </div>
          <div className="flex-1 border-b border-[#333] bg-[repeating-linear-gradient(135deg,#cecece_0px,#cecece_2px,#e0e0e0_2px,#e0e0e0_3.500px)]" />
        </div>
      </div>
      <Taskbar />
    </div>
  );
}
